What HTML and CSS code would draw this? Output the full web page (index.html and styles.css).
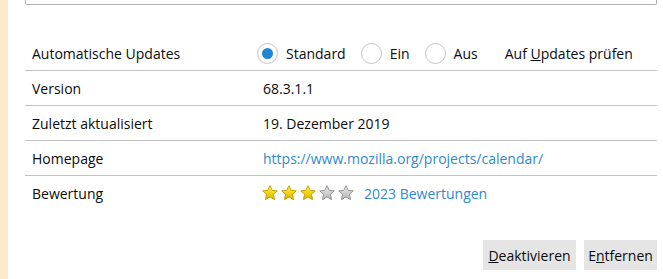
FILE: index.html
```html
<!DOCTYPE html>
<html>
<head>
    <title>Add-on Details</title>
    <link rel="stylesheet" href="styles.css">
</head>
<body>
    <svg class="defs" width="0" height="0">
        <defs>
            <linearGradient id="gold" x1="0" y1="0" x2="0" y2="1">
                <stop offset="0" stop-color="#fff36a"/>
                <stop offset="0.6" stop-color="#f0d000"/>
                <stop offset="1" stop-color="#d9a800"/>
            </linearGradient>
            <linearGradient id="grey" x1="0" y1="0" x2="0" y2="1">
                <stop offset="0" stop-color="#ececec"/>
                <stop offset="1" stop-color="#b4b4b4"/>
            </linearGradient>
        </defs>
    </svg>
    <div class="page">
        <div class="sidebar"></div>
        <div class="main">
            <div class="desc-box"></div>

            <div class="details">
                <div class="row">
                    <div class="label">Automatische Updates</div>
                    <div class="value radios">
                        <span class="radio checked"></span><span class="opt">Standard</span>
                        <span class="radio"></span><span class="opt">Ein</span>
                        <span class="radio"></span><span class="opt">Aus</span>
                        <span class="check">Auf <u>U</u>pdates prüfen</span>
                    </div>
                </div>
                <div class="row">
                    <div class="label">Version</div>
                    <div class="value">68.3.1.1</div>
                </div>
                <div class="row">
                    <div class="label">Zuletzt aktualisiert</div>
                    <div class="value">19. Dezember 2019</div>
                </div>
                <div class="row">
                    <div class="label">Homepage</div>
                    <div class="value"><a href="#" class="link">https://www.mozilla.org/projects/calendar/</a></div>
                </div>
                <div class="row last">
                    <div class="label">Bewertung</div>
                    <div class="value stars">
                        <svg class="star" viewBox="0 0 14 14"><polygon class="on" points="7,0.6 8.9,4.7 13.4,5.1 10,8.1 11,12.8 7,10.4 3,12.8 4,8.1 0.6,5.1 5.1,4.7"/></svg>
                        <svg class="star" viewBox="0 0 14 14"><polygon class="on" points="7,0.6 8.9,4.7 13.4,5.1 10,8.1 11,12.8 7,10.4 3,12.8 4,8.1 0.6,5.1 5.1,4.7"/></svg>
                        <svg class="star" viewBox="0 0 14 14"><polygon class="on" points="7,0.6 8.9,4.7 13.4,5.1 10,8.1 11,12.8 7,10.4 3,12.8 4,8.1 0.6,5.1 5.1,4.7"/></svg>
                        <svg class="star" viewBox="0 0 14 14"><polygon class="off" points="7,0.6 8.9,4.7 13.4,5.1 10,8.1 11,12.8 7,10.4 3,12.8 4,8.1 0.6,5.1 5.1,4.7"/></svg>
                        <svg class="star" viewBox="0 0 14 14"><polygon class="off" points="7,0.6 8.9,4.7 13.4,5.1 10,8.1 11,12.8 7,10.4 3,12.8 4,8.1 0.6,5.1 5.1,4.7"/></svg>
                        <a href="#" class="link reviews">2023 Bewertungen</a>
                    </div>
                </div>
            </div>

            <div class="actions">
                <button class="btn btn-wide"><u>D</u>eaktivieren</button>
                <button class="btn">E<u>n</u>tfernen</button>
            </div>
        </div>
    </div>
</body>
</html>
```

FILE: styles.css
```css
body { margin: 0; font-family: "Open Sans", "Noto Sans", sans-serif; font-size: 14px; color: #0c0c0d; background: #fff; }
.defs { position: absolute; }
.page { display: flex; height: 279px; overflow: hidden; }
.sidebar { width: 8px; background: #fde9ca; flex: none; }
.main { flex: 1; padding: 0 6px 0 17px; }
.desc-box { height: 4px; border: 1px solid #b1b1b3; border-top: none; border-radius: 0 0 2px 2px; }

.details { margin-top: 31px; }
.row { display: flex; align-items: center; height: 34px; border-bottom: 1px solid #c2c2c4; }
.row.last { border-bottom: none; }
.label { width: 232px; padding-left: 7px; box-sizing: border-box; flex: none; }
.value { padding-left: 6px; }

.radios { display: flex; align-items: center; padding-left: 0; }
.radio { width: 19px; height: 19px; border: 1px solid #c5c5c5; border-radius: 50%; box-sizing: content-box; display: flex; align-items: center; justify-content: center; }
.radio.checked::after { content: ""; width: 11px; height: 11px; border-radius: 50%; background: #1d87d6; }
.opt { margin: 0 15px 0 8px; }
.check { margin-left: 12px; }

.link { color: #2e8ad2; text-decoration: none; }
.stars { display: flex; align-items: center; padding-left: 5px; }
.star { width: 16px; height: 16px; margin-right: 3px; }
.star .on { fill: url(#gold); stroke: #c29a00; stroke-width: 0.8; stroke-linejoin: round; }
.star .off { fill: url(#grey); stroke: #8e8e8e; stroke-width: 0.8; stroke-linejoin: round; }
.reviews { margin-left: 7px; }

.actions { display: flex; justify-content: flex-end; gap: 8px; margin-top: 30px; }
.btn { font-family: inherit; font-size: 14px; color: #0c0c0d; background: #e5e5e5; border: none; height: 30px; padding: 0; width: 73px; }
.btn-wide { width: 93px; }
```
